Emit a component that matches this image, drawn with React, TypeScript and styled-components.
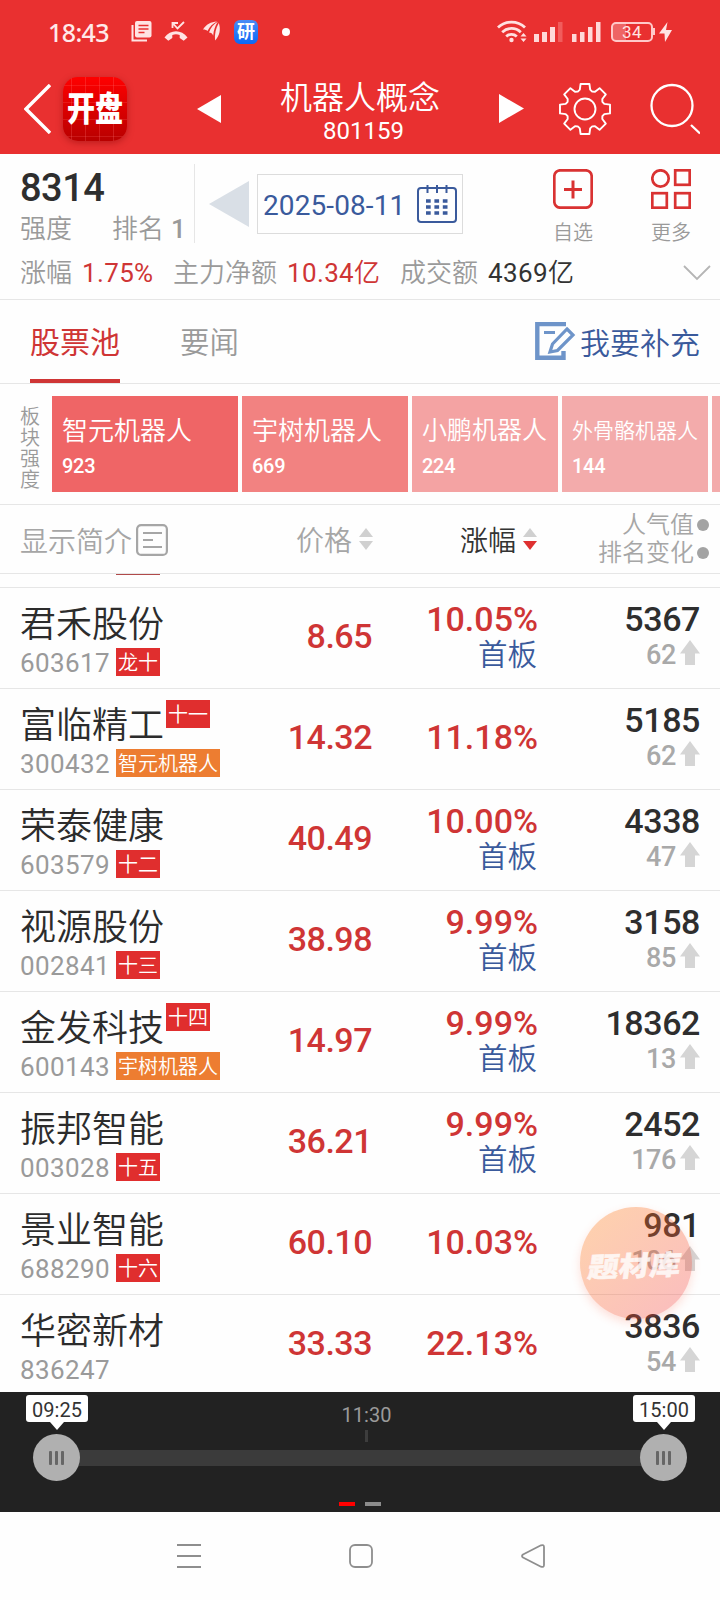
import React from "react";
import styled, { createGlobalStyle, css } from "styled-components";

const RED = "#cf3535";
const GREY = "#9a9a9a";
const BLUE = "#3a5a9c";
const LINE = "#e6e6e6";

const Global = createGlobalStyle`
  * { box-sizing: border-box; }
  body { margin: 0; background: #fff; }
  body, button { font-family: Roboto, "Noto Sans CJK SC", sans-serif; font-weight: 400; }
  svg { display: block; flex: none; }
`;

const Screen = styled.div`
  width: 720px;
  height: 1600px;
  display: flex;
  flex-direction: column;
  overflow: hidden;
  background: #fefefe;
  position: relative;
`;

/* ---------- red header ---------- */
const Header = styled.header`
  height: 154px;
  background: #e93030;
  color: #fff;
  flex: none;
`;
const StatusBar = styled.div`
  height: 65px;
  display: flex;
  align-items: center;
  padding: 0 47px 1px 48px;
`;
const Clock = styled.span`
  width: 83px;
  color: #ffe9e9;
  font-weight: 500;
  font-family: "Noto Sans", Roboto, sans-serif;
  font-size: 25px;
  line-height: 30px;
  letter-spacing: -0.6px;
`;
const AppChip = styled.span`
  width: 24px;
  height: 24px;
  border-radius: 6px;
  margin-left: 13px;
  background: linear-gradient(#4b8bf5, #0a68f6);
  font-size: 18px;
  line-height: 24px;
  text-align: center;
  font-weight: 700;
`;
const Spacer = styled.div`
  flex: 1;
`;
const Battery = styled.span`
  width: 42px;
  height: 20px;
  border: 2px solid #ffc9c9;
  border-radius: 5px;
  background: linear-gradient(90deg, #ee6565 34%, transparent 34%);
  font-size: 17px;
  line-height: 17px;
  text-align: center;
  letter-spacing: 0.5px;
  color: #ffe3e3;
  margin-left: 10px;
`;
const TitleBar = styled.div`
  height: 89px;
  display: flex;
  align-items: center;
  padding: 0 20px 2px 24px;
`;
const Logo = styled.div`
  width: 64px;
  height: 64px;
  margin-left: 12px;
  border-radius: 15px;
  background:
    repeating-linear-gradient(90deg, transparent 0 8px, rgba(255, 120, 120, 0.25) 8px 9px, transparent 9px 14px),
    repeating-linear-gradient(transparent 0 8px, rgba(255, 120, 120, 0.2) 8px 9px, transparent 9px 17px),
    linear-gradient(#ff0000, #b80000);
  box-shadow: 0 2px 7px rgba(120, 0, 0, 0.4);
  display: flex;
  align-items: center;
  justify-content: center;
  & span {
    font-size: 28px;
    line-height: 34px;
    font-weight: 900;
    white-space: nowrap;
    transform: translateY(1px) scaleY(1.22);
  }
`;
const TitleBlock = styled.div`
  width: 278px;
  padding-top: 6px;
  text-align: center;
`;
const Title = styled.div`
  font-size: 32px;
  line-height: 38px;
  font-weight: 350;
`;
const TitleCode = styled.div`
  font-size: 24px;
  line-height: 28px;
  padding-left: 7px;
`;

/* ---------- summary ---------- */
const Summary = styled.section`
  height: 146px;
  flex: none;
  border-bottom: 1px solid ${LINE};
`;
const SummaryTop = styled.div`
  height: 97px;
  display: flex;
  padding-left: 20px;
`;
const Score = styled.div`
  width: 175px;
  height: 79px;
  margin-top: 10px;
  border-right: 1px solid ${LINE};
`;
const ScoreValue = styled.div`
  font-size: 38px;
  line-height: 46px;
  margin-top: 1px;
  font-weight: 500;
  color: #2e2e2e;
  letter-spacing: -0.5px;
`;
const ScoreMeta = styled.div`
  display: flex;
  padding-top: 4px;
  font-size: 26px;
  line-height: 28px;
  color: ${GREY};
  font-weight: 350;
`;
const Rank = styled.span`
  margin-left: 40px;
  & b { font-weight: 500; margin-left: 7px; }
`;
const DateBox = styled.div`
  width: 206px;
  height: 60px;
  margin: 20px 0 0 8px;
  border: 1px solid #dcdcdc;
  display: flex;
  align-items: center;
  justify-content: space-between;
  padding: 2px 5px 0;
  font-size: 28px;
  letter-spacing: 0.1px;
  color: ${BLUE};
`;
const Action = styled.div<{ $gap: number }>`
  width: 40px;
  margin: 15px 0 0 ${(p) => p.$gap}px;
  display: flex;
  flex-direction: column;
  align-items: center;
  white-space: nowrap;
  font-size: 20px;
  line-height: 24px;
  font-weight: 350;
  color: ${GREY};
  & svg { margin-bottom: 12px; }
`;
const Metrics = styled.div`
  display: flex;
  align-items: center;
  height: 45px;
  padding: 0 9px 1px 20px;
  font-size: 26px;
  line-height: 30px;
  color: ${GREY};
  font-weight: 350;
`;
const Metric = styled.span<{ $tone: string; $w: number }>`
  color: ${(p) => p.$tone};
  font-weight: 400;
  letter-spacing: 0.35px;
  width: ${(p) => p.$w}px;
  padding-left: 10px;
  white-space: nowrap;
  & span { font-weight: 350; }
`;

/* ---------- tabs ---------- */
const Tabs = styled.nav`
  height: 84px;
  flex: none;
  display: flex;
  padding: 0 20px 0 30px;
  border-bottom: 1px solid ${LINE};
`;
const Tab = styled.div<{ $active?: boolean }>`
  height: 83px;
  margin-right: 60px;
  font-size: ${(p) => (p.$active ? 30 : 29.5)}px;
  line-height: 86px;
  color: ${(p) => (p.$active ? RED : GREY)};
  font-weight: ${(p) => (p.$active ? 400 : 350)};
  ${(p) => p.$active && css`box-shadow: inset 0 -4px ${RED};`}
`;
const Contribute = styled.div`
  display: flex;
  align-items: center;
  gap: 4px;
  padding-bottom: 2px;
  font-size: 30px;
  font-weight: 350;
  color: ${BLUE};
`;

/* ---------- sector strength ---------- */
const Strength = styled.section`
  height: 121px;
  flex: none;
  display: flex;
  padding: 12px 0 0 20px;
  border-bottom: 1px solid ${LINE};
  overflow: hidden;
`;
const StrengthLabel = styled.div`
  width: 32px;
  padding: 11px 12px 0 0;
  font-size: 20px;
  line-height: 21px;
  font-weight: 350;
  color: ${GREY};
`;
const Sector = styled.div<{ $w: number; $bg: string; $size: number }>`
  flex: none;
  width: ${(p) => p.$w}px;
  height: 96px;
  margin-right: 4px;
  padding: 17px 0 0 10px;
  background: ${(p) => p.$bg};
  color: #fff;
  font-size: ${(p) => p.$size}px;
  line-height: 36px;
  font-weight: 350;
  white-space: nowrap;
`;
const SectorScore = styled.div`
  font-size: 20px;
  line-height: 34px;
  font-weight: 500;
  letter-spacing: -0.3px;
`;

/* ---------- table ---------- */
const TableHead = styled.div`
  height: 69px;
  flex: none;
  display: flex;
  align-items: center;
  padding: 0 11px 0 20px;
  border-bottom: 1px solid ${LINE};
  font-size: 28px;
  font-weight: 350;
  color: #a6a6a6;
`;
const Intro = styled.div`
  display: flex;
  align-items: center;
  gap: 4px;
  width: 276px;
  padding-top: 2px;
`;
const SortHead = styled.div<{ $on?: boolean; $w: number }>`
  display: flex;
  align-items: center;
  gap: 7px;
  width: ${(p) => p.$w}px;
  font-size: 28px;
  color: ${(p) => (p.$on ? "#333" : "#a6a6a6")};
`;
const Ranks = styled.div`
  flex: 1;
  font-size: 24px;
  line-height: 28px;
`;
const RankLine = styled.div`
  display: flex;
  justify-content: flex-end;
  align-items: center;
  gap: 3px;
`;
const Dot = styled.i`
  width: 12px;
  height: 12px;
  border-radius: 50%;
  background: #a3a3a3;
`;
const List = styled.main`
  height: 818px;
  flex: none;
  overflow: hidden;
`;
const CutRow = styled.div`
  height: 14px;
  padding-left: 116px;
  border-bottom: 1px solid ${LINE};
  &::before {
    content: "";
    display: block;
    width: 44px;
    height: 1px;
    background: #b04a4a;
  }
`;
const Row = styled.div`
  height: 101px;
  display: flex;
  padding: 0 20px;
  border-bottom: 1px solid ${LINE};
`;
const Stock = styled.div`
  width: 222px;
  padding-top: 11px;
`;
const NameLine = styled.div`
  display: flex;
  height: 49px;
  font-size: 36px;
  line-height: 53px;
  font-weight: 350;
  color: #2c2c2c;
  gap: 2px;
`;
const CodeLine = styled.div`
  display: flex;
  align-items: center;
  height: 28px;
  font-size: 26px;
  color: ${GREY};
  letter-spacing: 0.4px;
`;
const Code = styled.span`
  width: 96px;
  padding-top: 2px;
  font-weight: 400;
`;
const Tag = styled.span<{ $orange?: boolean }>`
  height: 28px;
  padding: 0 2px;
  font-size: 20px;
  line-height: 30px;
  letter-spacing: 0;
  font-weight: 350;
  color: #fff;
  background: ${(p) => (p.$orange ? "#ed7d31" : "#e02e2e")};
`;
const numeral = css`
  font-size: 34px;
  line-height: 36px;
  font-weight: 500;
  text-align: right;
`;
const Price = styled.div`
  ${numeral}
  width: 130px;
  padding-top: 30px;
  letter-spacing: -0.5px;
  color: ${RED};
`;
const Change = styled.div<{ $single: boolean }>`
  ${numeral}
  width: 166px;
  padding-top: ${(p) => (p.$single ? 30 : 13)}px;
  color: ${RED};
`;
const Board = styled.div`
  font-size: 29.5px;
  line-height: 37px;
  padding-right: 1px;
  font-weight: 350;
  color: ${BLUE};
`;
const Heat = styled.div`
  ${numeral}
  flex: 1;
  padding-top: 13px;
  letter-spacing: -0.4px;
  color: #2e2e2e;
`;
const HeatMove = styled.div`
  display: flex;
  justify-content: flex-end;
  align-items: center;
  gap: 4px;
  font-size: 27px;
  color: #a9a9a9;
  & svg { margin-top: -5px; }
`;

/* ---------- floating button ---------- */
const FloatButton = styled.div`
  position: absolute;
  left: 580px;
  top: 1207px;
  width: 112px;
  height: 112px;
  border-radius: 50%;
  background: linear-gradient(135deg, rgba(255, 130, 20, 0.35), rgba(243, 60, 70, 0.34));
  box-shadow: 0 4px 10px rgba(250, 100, 70, 0.2);
  display: flex;
  align-items: center;
  justify-content: center;
  white-space: nowrap;
  & span {
    font-size: 31px;
    line-height: 36px;
    font-weight: 900;
    color: #fff;
    opacity: 0.82;
    -webkit-text-stroke: 0.5px #fff;
    transform: translate(-2px, 4px) rotate(-2deg) skewX(-10deg) scaleY(0.88);
  }
`;

/* ---------- time slider ---------- */
const TimePanel = styled.section`
  height: 120px;
  flex: none;
  background: #222;
  display: flex;
  flex-direction: column;
  align-items: center;
  position: relative;
`;
const NoonLabel = styled.div`
  margin: 11px 0 0 13px;
  font-size: 20px;
  line-height: 24px;
  color: #9a9a9a;
`;
const NoonTick = styled.div`
  width: 3px;
  height: 12px;
  margin: 3px 0 0 12px;
  background: #3d3d3d;
`;
const Slider = styled.div`
  align-self: stretch;
  display: flex;
  align-items: center;
  padding: 0 33px;
  margin-top: -8px;
`;
const Knob = styled.div`
  width: 47px;
  height: 47px;
  border-radius: 50%;
  background: #b0b0b0;
  z-index: 1;
  display: flex;
  align-items: center;
  justify-content: center;
  gap: 3px;
  & i { width: 3px; height: 14px; border-radius: 1px; background: #666; }
`;
const Track = styled.div`
  flex: 1;
  height: 16px;
  background: #3b3b3b;
  margin: 0 -6px;
`;
const TimeTip = styled.div<{ $left: number }>`
  position: absolute;
  top: 3px;
  left: ${(p) => p.$left}px;
  width: 62px;
  height: 27px;
  border-radius: 3px;
  background: #fff;
  color: #333;
  font-size: 20px;
  line-height: 30px;
  text-align: center;
  &::after {
    content: "";
    position: absolute;
    left: 24px;
    top: 27px;
    border: 7px solid transparent;
    border-top: 8px solid #fff;
    border-bottom: 0;
  }
`;
const Pager = styled.div`
  display: flex;
  gap: 10px;
  margin-top: 21px;
`;
const Page = styled.i<{ $on?: boolean }>`
  width: 16px;
  height: 4px;
  background: ${(p) => (p.$on ? "#f00" : "#8c8c8c")};
`;
const NavBar = styled.footer`
  height: 88px;
  flex: none;
  display: flex;
  align-items: center;
  gap: 146px;
  padding: 0 0 0 176px;
`;

/* ---------- drawings ---------- */
const StatusIcons = () => (
  <svg width="90" height="24" viewBox="0 0 90 24" fill="none">
    <path d="M1.500 5v15.500H16" stroke="#ffe3e3" strokeWidth="2" />
    <rect x="4" y="1" width="16.500" height="16.500" rx="2" fill="#ffe3e3" />
    <path d="M7.500 5.500h10M7.500 9h10M7.500 12.500h6" stroke="#e93030" strokeWidth="1.500" />
    <path d="M33.500 17.500c6-8.500 17-8.500 23 0l-3.800 3.200-4-2.800v-2.800c-2.500-1-5-1-7.400 0v2.800l-4 2.800z" fill="#ffe3e3" />
    <path d="M41.500 8V3H47M42 3.500l4.500 5L53 2" stroke="#ffe3e3" strokeWidth="1.800" />
    <path d="M72 9.500C75 4.500 80 1.800 86 1.500c-4 2-7.500 5-9.500 9.500-1.300-1.200-3-1.700-4.500-1.500z" fill="#ffe3e3" />
    <path d="M78 12.500c1.500-4.500 4.500-8.500 8.800-10.800-2.600 4-4.200 8.500-4.600 14-.8-2-2.200-3.200-4.200-3.200z" fill="#ffe3e3" />
    <path d="M84 20.500c-.5-6.500.8-12.500 3.800-17.500 2.200 6.500.7 13-3.800 17.500z" fill="#ffe3e3" />
  </svg>
);

const SignalIcons = () => (
  <svg width="104" height="24" viewBox="0 0 104 24" fill="none">
    <g stroke="#ffe0e0" strokeWidth="2.800">
      <path d="M1 7.500C8.500.2 20.500.2 28 7.500" />
      <path d="M5.200 12.200c5.300-5 13.300-5 18.600 0" />
      <path d="M9.200 16.500c3-2.800 7.600-2.800 10.600 0" />
    </g>
    <circle cx="14.500" cy="20" r="2.200" fill="#ffe0e0" />
    <path d="M23.500 16.500l3-3.500 3 3.500zM23.500 18.500l3 3.500 3-3.500z" fill="#ffe0e0" />
    <g fill="#ffd8d8">
      <rect x="37" y="14" width="5" height="8" />
      <rect x="45" y="12" width="5" height="10" />
      <rect x="53" y="7" width="5" height="15" />
      <rect x="75" y="14" width="4.500" height="8" />
      <rect x="83" y="12" width="4.500" height="10" />
      <rect x="91" y="7" width="4.500" height="15" />
      <rect x="99" y="2" width="4.500" height="20" />
    </g>
    <rect x="61" y="2" width="4.500" height="20" fill="#f15c5c" />
  </svg>
);

const BoltIcon = () => (
  <svg width="20" height="22" viewBox="0 0 20 22">
    <rect x="0" y="7" width="2" height="7" fill="#ffc9c9" />
    <path d="M14.500 1L6 12.500h5.500L12 21l7-12h-6z" fill="#ffe3e3" />
  </svg>
);

const Solid = ({ w, h, dir, color = "#fff" }: { w: number; h: number; dir: "l" | "r"; color?: string }) => (
  <svg width={w} height={h}>
    <path d={dir === "l" ? `M0 ${h / 2}L${w} 0V${h}z` : `M${w} ${h / 2}L0 0V${h}z`} fill={color} />
  </svg>
);

const gearPath = (() => {
  const pts: string[] = [];
  const add = (r: number, deg: number) => {
    const a = (deg * Math.PI) / 180;
    pts.push(`${(26 + r * Math.sin(a)).toFixed(2)} ${(26 - r * Math.cos(a)).toFixed(2)}`);
  };
  for (let k = 0; k < 8; k++) {
    const c = k * 45;
    add(20, c - 15);
    add(25.4, c - 10);
    add(25.4, c + 10);
    add(20, c + 15);
    add(18.8, c + 22.5);
  }
  return `M${pts.join("L")}z`;
})();

const GearIcon = () => (
  <svg width="52" height="52" viewBox="0 0 52 52" fill="none" stroke="#fff" strokeWidth="1.900" strokeLinejoin="round">
    <path d={gearPath} />
    <circle cx="26" cy="26" r="10.500" />
  </svg>
);

const SearchIcon = () => (
  <svg width="50" height="52" viewBox="0 0 50 52" fill="none" stroke="#fff" strokeWidth="2.300">
    <circle cx="22" cy="22.500" r="20.500" />
    <path d="M41 42l9 8.500" />
  </svg>
);

const CalendarIcon = () => (
  <svg width="40" height="40" viewBox="0 0 40 40" fill="none" stroke={BLUE} strokeWidth="2">
    <rect x="1" y="3" width="38" height="34" rx="3" />
    <path d="M10.500 0v8M20 0v8M29.500 0v8" />
    <path d="M9 16h4.700m3.700 0h4.700m3.700 0h4.700M9 22h4.700m3.700 0h4.700m3.700 0h4.700M9 28h4.700m3.700 0h4.700m3.700 0h4.700" strokeWidth="3.700" />
  </svg>
);

const AddIcon = () => (
  <svg width="40" height="40" viewBox="0 0 40 40" fill="none" stroke="#d93232" strokeWidth="2.700">
    <rect x="1.300" y="1.300" width="37.400" height="37.400" rx="6" />
    <path d="M11 20.500h18M20 11.500v18" strokeWidth="3" />
  </svg>
);

const MoreIcon = () => (
  <svg width="40" height="40" viewBox="0 0 40 40" fill="none" stroke="#d93232" strokeWidth="2.700">
    <circle cx="9.500" cy="9.500" r="8.200" />
    <rect x="24.200" y="1.300" width="14.500" height="14.500" />
    <rect x="1.300" y="24.200" width="14.500" height="14.500" />
    <rect x="24.200" y="24.200" width="14.500" height="14.500" />
  </svg>
);

const EditIcon = () => (
  <svg width="41" height="38" viewBox="0 0 41 38" fill="none" stroke="#6e94c9">
    <path d="M31 2H2.300v33.800H28.500V29" strokeWidth="4.400" />
    <path d="M9 10.500h11" strokeWidth="3" />
    <path d="M32 7l6 6-15.500 15.500-7.500 1.500 2.500-8z" strokeWidth="3.200" />
  </svg>
);

const IntroIcon = () => (
  <svg width="32" height="32" viewBox="0 0 32 32" fill="none" stroke="#a6a6a6" strokeWidth="2.200">
    <rect x="1.100" y="1.100" width="29.800" height="29.800" rx="4" />
    <path d="M7 9h19M7 16h10M7 23h19" />
  </svg>
);

const SortIcon = ({ down }: { down?: boolean }) => (
  <svg width="14" height="22" viewBox="0 0 14 22">
    <path d="M7 0l7 9H0z" fill="#d0d0d0" />
    <path d="M7 22l7-9H0z" fill={down ? "#de3030" : "#d0d0d0"} />
  </svg>
);

const UpArrow = () => (
  <svg width="20" height="25" viewBox="0 0 20 25">
    <path d="M10 0L20 13.500H15V25H5V13.500H0z" fill="#d5d5d5" />
  </svg>
);

/* ---------- data ---------- */
const sectors = [
  { name: "智元机器人", score: "923", w: 186, bg: "#ef6566", size: 26 },
  { name: "宇树机器人", score: "669", w: 166, bg: "#f28281", size: 26 },
  { name: "小鹏机器人", score: "224", w: 146, bg: "#f4a3a3", size: 25 },
  { name: "外骨骼机器人", score: "144", w: 146, bg: "#f3abab", size: 21 },
];

interface StockRow {
  name: string;
  code: string;
  tag?: string;
  sup?: string;
  theme?: string;
  price: string;
  change: string;
  first?: boolean;
  heat: string;
  move: string;
}

const stocks: StockRow[] = [
  { name: "君禾股份", code: "603617", tag: "龙十", price: "8.65", change: "10.05%", first: true, heat: "5367", move: "62" },
  { name: "富临精工", code: "300432", sup: "十一", theme: "智元机器人", price: "14.32", change: "11.18%", heat: "5185", move: "62" },
  { name: "荣泰健康", code: "603579", tag: "十二", price: "40.49", change: "10.00%", first: true, heat: "4338", move: "47" },
  { name: "视源股份", code: "002841", tag: "十三", price: "38.98", change: "9.99%", first: true, heat: "3158", move: "85" },
  { name: "金发科技", code: "600143", sup: "十四", theme: "宇树机器人", price: "14.97", change: "9.99%", first: true, heat: "18362", move: "13" },
  { name: "振邦智能", code: "003028", tag: "十五", price: "36.21", change: "9.99%", first: true, heat: "2452", move: "176" },
  { name: "景业智能", code: "688290", tag: "十六", price: "60.10", change: "10.03%", heat: "981", move: "106" },
  { name: "华密新材", code: "836247", price: "33.33", change: "22.13%", heat: "3836", move: "54" },
];

const Grip = () => (
  <Knob>
    <i />
    <i />
    <i />
  </Knob>
);

export default function App() {
  return (
    <Screen>
      <Global />
      <Header>
        <StatusBar>
          <Clock>18:43</Clock>
          <StatusIcons />
          <AppChip>研</AppChip>
          <svg width="40" height="10">
            <circle cx="28" cy="5" r="4" fill="#fff" />
          </svg>
          <Spacer />
          <SignalIcons />
          <Battery>34</Battery>
          <BoltIcon />
        </StatusBar>
        <TitleBar>
          <svg width="27" height="50" viewBox="0 0 27 50" fill="none" stroke="#fff" strokeWidth="3.400">
            <path d="M26 1L2 25l24 24" />
          </svg>
          <Logo>
            <span>开盘</span>
          </Logo>
          <svg width="70" height="1" />
          <Solid w={24} h={28} dir="l" />
          <TitleBlock>
            <Title>机器人概念</Title>
            <TitleCode>801159</TitleCode>
          </TitleBlock>
          <Solid w={25} h={29} dir="r" />
          <Spacer />
          <GearIcon />
          <svg width="39" height="1" />
          <SearchIcon />
        </TitleBar>
      </Header>

      <Summary>
        <SummaryTop>
          <Score>
            <ScoreValue>8314</ScoreValue>
            <ScoreMeta>
              强度
              <Rank>
                排名<b>1</b>
              </Rank>
            </ScoreMeta>
          </Score>
          <svg width="54" height="73">
            <path d="M14 50L54 27V73z" fill="#d9dfe6" />
          </svg>
          <DateBox>
            2025-08-11
            <CalendarIcon />
          </DateBox>
          <Action $gap={90}>
            <AddIcon />
            自选
          </Action>
          <Action $gap={58}>
            <MoreIcon />
            更多
          </Action>
        </SummaryTop>
        <Metrics>
          涨幅
          <Metric $tone={RED} $w={101}>1.75%</Metric>
          主力净额
          <Metric $tone={RED} $w={123}>10.34<span>亿</span></Metric>
          成交额
          <Metric $tone="#333" $w={100}>4369<span>亿</span></Metric>
          <Spacer />
          <svg width="28" height="16" fill="none" stroke="#b5b5b5" strokeWidth="1.800">
            <path d="M1 1l13 13L27 1" />
          </svg>
        </Metrics>
      </Summary>

      <Tabs>
        <Tab $active>股票池</Tab>
        <Tab>要闻</Tab>
        <Spacer />
        <Contribute>
          <EditIcon />
          我要补充
        </Contribute>
      </Tabs>

      <Strength>
        <StrengthLabel>板块强度</StrengthLabel>
        {sectors.map((s) => (
          <Sector key={s.name} $w={s.w} $bg={s.bg} $size={s.size}>
            {s.name}
            <SectorScore>{s.score}</SectorScore>
          </Sector>
        ))}
        <Sector $w={146} $bg="#f3abab" $size={26} />
      </Strength>

      <TableHead>
        <Intro>
          显示简介
          <IntroIcon />
        </Intro>
        <SortHead $w={164}>
          价格
          <SortIcon />
        </SortHead>
        <SortHead $on $w={100}>
          涨幅
          <SortIcon down />
        </SortHead>
        <Ranks>
          <RankLine>
            人气值
            <Dot />
          </RankLine>
          <RankLine>
            排名变化
            <Dot />
          </RankLine>
        </Ranks>
      </TableHead>

      <List>
        <CutRow />
        {stocks.map((s) => (
          <Row key={s.code}>
            <Stock>
              <NameLine>
                {s.name}
                {s.sup && <Tag>{s.sup}</Tag>}
              </NameLine>
              <CodeLine>
                <Code>{s.code}</Code>
                {s.tag && <Tag>{s.tag}</Tag>}
                {s.theme && <Tag $orange>{s.theme}</Tag>}
              </CodeLine>
            </Stock>
            <Price>{s.price}</Price>
            <Change $single={!s.first}>
              {s.change}
              {s.first && <Board>首板</Board>}
            </Change>
            <Heat>
              {s.heat}
              <HeatMove>
                {s.move}
                <UpArrow />
              </HeatMove>
            </Heat>
          </Row>
        ))}
      </List>

      <TimePanel>
        <NoonLabel>11:30</NoonLabel>
        <NoonTick />
        <Slider>
          <Grip />
          <Track />
          <Grip />
        </Slider>
        <Pager>
          <Page $on />
          <Page />
        </Pager>
        <TimeTip $left={26}>09:25</TimeTip>
        <TimeTip $left={633}>15:00</TimeTip>
      </TimePanel>

      <NavBar>
        <svg width="26" height="26" fill="none" stroke="#8e8e8e" strokeWidth="2">
          <path d="M1 2h24M1 13h24M1 24h24" />
        </svg>
        <svg width="26" height="26" fill="none" stroke="#8e8e8e" strokeWidth="1.800">
          <rect x="2" y="2" width="22" height="22" rx="5" />
        </svg>
        <svg width="26" height="26" fill="none" stroke="#8e8e8e" strokeWidth="1.800" strokeLinejoin="round">
          <path d="M3 11.500L21 2.300q3-1 3 1.700v18q0 2.700-3 1.700L3 14.500q-2-1.500 0-3z" />
        </svg>
      </NavBar>

      <FloatButton>
        <span>题材库</span>
      </FloatButton>
    </Screen>
  );
}
